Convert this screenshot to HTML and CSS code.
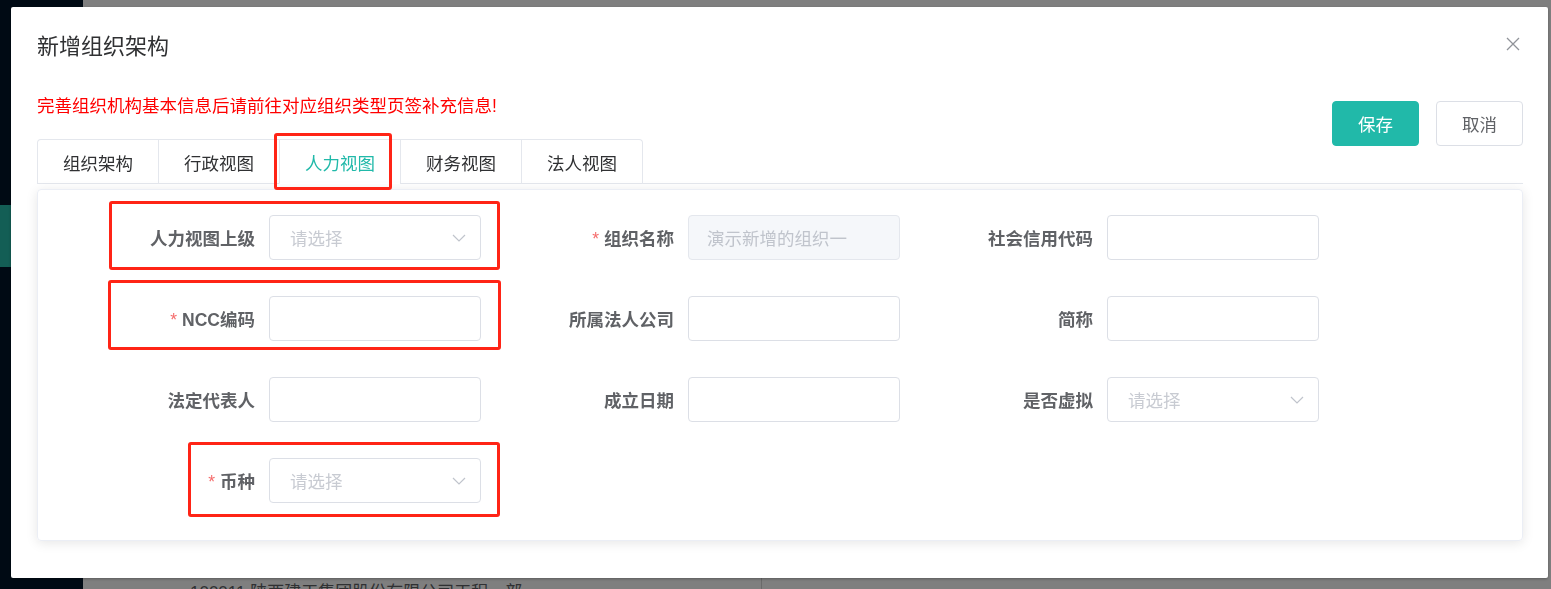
FILE: index.html
```html
<!DOCTYPE html>
<html>
<head>
    <title>新增组织架构</title>
    <meta charset="utf-8">
    <meta name="viewport" content="width=device-width, initial-scale=1">
    <link rel="stylesheet" href="styles.css">
</head>
<body>
    <div class="page">
        <aside class="sidebar">
            <div class="menu-item active"></div>
        </aside>
        <main class="main">
            <div class="table-row">
                <div class="cell cell-name">100011 陕西建工集团股份有限公司工程一部</div>
                <div class="cell"></div>
            </div>
        </main>
    </div>

    <div class="mask"></div>

    <div class="dialog">
        <div class="dialog-header">
            <span class="dialog-title">新增组织架构</span>
            <button class="dialog-close" aria-label="关闭">
                <svg width="14" height="14" viewBox="0 0 14 14">
                    <path d="M1 1 L13 13 M13 1 L1 13" stroke="#909399" stroke-width="1.3" fill="none"/>
                </svg>
            </button>
        </div>

        <div class="dialog-body">
            <p class="tip">完善组织机构基本信息后请前往对应组织类型页签补充信息!</p>

            <div class="actions">
                <button class="btn btn-primary">保存</button>
                <button class="btn">取消</button>
            </div>

            <div class="tabs">
                <div class="tab-nav">
                    <div class="tab">组织架构</div>
                    <div class="tab">行政视图</div>
                    <div class="tab active">人力视图<span class="mark mark-tab"></span></div>
                    <div class="tab">财务视图</div>
                    <div class="tab">法人视图</div>
                </div>
            </div>

            <div class="card">
                <div class="form-grid">
                    <div class="form-item">
                        <label class="form-label">人力视图上级</label>
                        <div class="select"><span class="placeholder">请选择</span>
                            <svg width="14" height="8" viewBox="0 0 14 8"><path d="M1 1 L7 7 L13 1" stroke="#c0c4cc" stroke-width="1.2" fill="none"/></svg>
                        </div>
                        <span class="mark mark-1"></span>
                    </div>
                    <div class="form-item">
                        <label class="form-label"><span class="req">*</span>组织名称</label>
                        <input class="input" type="text" value="演示新增的组织一" disabled>
                    </div>
                    <div class="form-item">
                        <label class="form-label">社会信用代码</label>
                        <input class="input" type="text">
                    </div>

                    <div class="form-item">
                        <label class="form-label"><span class="req">*</span>NCC编码</label>
                        <input class="input" type="text">
                        <span class="mark mark-2"></span>
                    </div>
                    <div class="form-item">
                        <label class="form-label">所属法人公司</label>
                        <input class="input" type="text">
                    </div>
                    <div class="form-item">
                        <label class="form-label">简称</label>
                        <input class="input" type="text">
                    </div>

                    <div class="form-item">
                        <label class="form-label">法定代表人</label>
                        <input class="input" type="text">
                    </div>
                    <div class="form-item">
                        <label class="form-label">成立日期</label>
                        <input class="input" type="text">
                    </div>
                    <div class="form-item">
                        <label class="form-label">是否虚拟</label>
                        <div class="select"><span class="placeholder">请选择</span>
                            <svg width="14" height="8" viewBox="0 0 14 8"><path d="M1 1 L7 7 L13 1" stroke="#c0c4cc" stroke-width="1.2" fill="none"/></svg>
                        </div>
                    </div>

                    <div class="form-item">
                        <label class="form-label"><span class="req">*</span>币种</label>
                        <div class="select"><span class="placeholder">请选择</span>
                            <svg width="14" height="8" viewBox="0 0 14 8"><path d="M1 1 L7 7 L13 1" stroke="#c0c4cc" stroke-width="1.2" fill="none"/></svg>
                        </div>
                        <span class="mark mark-3"></span>
                    </div>
                </div>
            </div>
        </div>
    </div>
</body>
</html>
```

FILE: styles.css
```css
* {
    box-sizing: border-box;
}

body {
    margin: 0;
    font-family: "Liberation Sans", "Noto Sans CJK SC", sans-serif;
    color: #303133;
    overflow: hidden;
}

/* page behind the dialog */
.page {
    display: flex;
    height: 100vh;
}

.sidebar {
    width: 83px;
    background-color: #001529;
    padding-top: 205px;
}

.menu-item {
    height: 62px;
}

.menu-item.active {
    background-color: #26bcaa;
}

.main {
    flex: 1;
    background-color: #fff;
    padding-top: 578px;
}

.table-row {
    display: flex;
    height: 11px;
    overflow: hidden;
}

.cell {
    flex: 1;
    font-size: 17px;
    line-height: 24px;
    color: #606266;
    padding-top: 3px;
}

.cell-name {
    flex: 0 0 679px;
    padding-left: 107px;
    border-right: 1px solid #d4d4d4;
}

.mask {
    position: fixed;
    inset: 0;
    background-color: rgba(0, 0, 0, 0.5);
}

/* dialog */
.dialog {
    position: fixed;
    left: 11px;
    top: 7px;
    width: 1537px;
    height: 571px;
    background-color: #fff;
    border-radius: 2px;
    box-shadow: 0 1px 3px rgba(0, 0, 0, 0.3);
}

.dialog-header {
    display: flex;
    justify-content: space-between;
    align-items: center;
    padding: 25px 28px 0 26px;
}

.dialog-title {
    font-size: 22px;
    line-height: 30px;
    color: #303133;
}

.dialog-close {
    border: none;
    background: none;
    padding: 0;
    width: 14px;
    height: 14px;
    margin-top: -6px;
    cursor: pointer;
}

.dialog-close svg {
    display: block;
}

.dialog-body {
    position: relative;
    padding: 32px 25px 0 26px;
}

.tip {
    margin: 0;
    font-size: 17.5px;
    line-height: 24px;
    color: #ff0000;
}

.actions {
    position: absolute;
    right: 25px;
    top: 39px;
    display: flex;
    gap: 17px;
    z-index: 2;
}

.btn {
    width: 87px;
    height: 45px;
    border: 1px solid #dcdfe6;
    border-radius: 4px;
    background-color: #fff;
    color: #606266;
    font-family: inherit;
    font-size: 17.5px;
    cursor: pointer;
}

.btn-primary {
    background-color: #21b9a9;
    border-color: #21b9a9;
    color: #fff;
}

/* tabs */
.tabs {
    display: flex;
    margin-top: 21px;
    border-bottom: 1px solid #e4e7ed;
}

.tab-nav {
    display: flex;
    border: 1px solid #e4e7ed;
    border-bottom: none;
    border-radius: 4px 4px 0 0;
    margin-bottom: -1px;
}

.tab {
    position: relative;
    width: 120px;
    height: 44px;
    padding-top: 3px;
    line-height: 43px;
    text-align: center;
    font-size: 17.5px;
    color: #303133;
    border-bottom: 1px solid transparent;
}

.tab + .tab {
    width: 121px;
    border-left: 1px solid #e4e7ed;
}

.tab.active {
    color: #21b9a9;
    border-bottom-color: #fff;
}

/* form card */
.card {
    margin-top: 5px;
    height: 352px;
    border: 1px solid #ebeef5;
    border-radius: 4px;
    box-shadow: 0 2px 12px 0 rgba(0, 0, 0, 0.1);
    padding: 25px 0 0 24px;
}

.form-grid {
    display: grid;
    grid-template-columns: repeat(3, 419px);
    grid-auto-rows: 45px;
    row-gap: 36px;
}

.form-item {
    position: relative;
    display: flex;
    align-items: center;
}

.form-label {
    width: 207px;
    padding-right: 14px;
    text-align: right;
    font-size: 17.5px;
    font-weight: bold;
    color: #606266;
}

.req {
    color: #f56c6c;
    font-weight: normal;
    margin-right: 5px;
}

.input,
.select {
    width: 212px;
    height: 45px;
    border: 1px solid #dcdfe6;
    border-radius: 4px;
    background-color: #fff;
    padding: 0 20px;
    font-family: inherit;
    font-size: 17.5px;
    color: #606266;
    outline: none;
}

.input:disabled {
    background-color: #f5f7fa;
    border-color: #e4e7ed;
    color: #c0c4cc;
    padding-left: 18px;
}

.select {
    display: flex;
    align-items: center;
    justify-content: space-between;
    padding-right: 14px;
}

.placeholder {
    color: #c8cbd2;
}

.select svg {
    display: block;
}

/* red annotation boxes */
.mark {
    position: absolute;
    border: 3px solid #ff2416;
    border-radius: 3px;
    pointer-events: none;
}

.mark-tab {
    left: -6px;
    right: 8px;
    top: -7px;
    bottom: -7px;
}

.mark-1 {
    left: 47px;
    right: -19px;
    top: -14px;
    bottom: -10px;
}

.mark-2 {
    left: 46px;
    right: -20px;
    top: -16px;
    bottom: -9px;
}

.mark-3 {
    left: 126px;
    right: -19px;
    top: -16px;
    bottom: -14px;
}
```
